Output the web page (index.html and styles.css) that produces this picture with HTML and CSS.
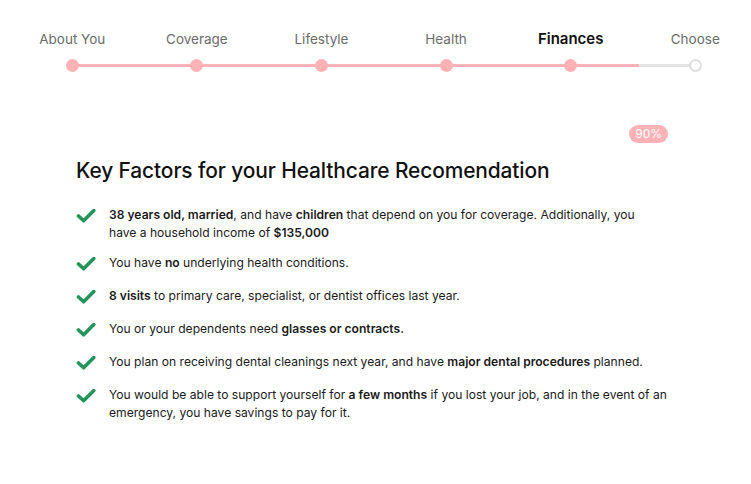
FILE: index.html
```html
<!DOCTYPE html>
<html lang="en">
<head>
<meta charset="utf-8">
<title>Key Factors</title>
<link rel="stylesheet" href="styles.css">
</head>
<body>
<div class="page">
  <nav class="stepper">
    <div class="labels">
      <span class="label">About You</span>
      <span class="label">Coverage</span>
      <span class="label">Lifestyle</span>
      <span class="label">Health</span>
      <span class="label current">Finances</span>
      <span class="label">Choose</span>
    </div>
    <div class="track">
      <div class="line"><div class="fill"></div></div>
      <span class="dot done"></span>
      <span class="dot done"></span>
      <span class="dot done"></span>
      <span class="dot done"></span>
      <span class="dot done"></span>
      <span class="dot todo"></span>
    </div>
  </nav>

  <div class="badge-row"><span class="badge">90%</span></div>

  <section class="factors">
    <h1 class="title">Key Factors for your Healthcare Recomendation</h1>
    <ul class="list">
      <li class="item">
        <svg class="check" viewBox="0 0 20 21" width="20" height="21"><path d="M2.5 10 L7.6 14.8 L17.8 4.6" fill="none" stroke="#24955a" stroke-width="3.6" stroke-linecap="round" stroke-linejoin="round"/></svg>
        <p class="text"><b>38 years old, married</b>, and have <b>children</b> that depend on you for coverage. Additionally, you<br>have a household income of <b>$135,000</b></p>
      </li>
      <li class="item">
        <svg class="check" viewBox="0 0 20 21" width="20" height="21"><path d="M2.5 10 L7.6 14.8 L17.8 4.6" fill="none" stroke="#24955a" stroke-width="3.6" stroke-linecap="round" stroke-linejoin="round"/></svg>
        <p class="text">You have <b>no</b> underlying health conditions.</p>
      </li>
      <li class="item">
        <svg class="check" viewBox="0 0 20 21" width="20" height="21"><path d="M2.5 10 L7.6 14.8 L17.8 4.6" fill="none" stroke="#24955a" stroke-width="3.6" stroke-linecap="round" stroke-linejoin="round"/></svg>
        <p class="text"><b>8 visits</b> to primary care, specialist, or dentist offices last year.</p>
      </li>
      <li class="item">
        <svg class="check" viewBox="0 0 20 21" width="20" height="21"><path d="M2.5 10 L7.6 14.8 L17.8 4.6" fill="none" stroke="#24955a" stroke-width="3.6" stroke-linecap="round" stroke-linejoin="round"/></svg>
        <p class="text">You or your dependents need <b>glasses or contracts.</b></p>
      </li>
      <li class="item">
        <svg class="check" viewBox="0 0 20 21" width="20" height="21"><path d="M2.5 10 L7.6 14.8 L17.8 4.6" fill="none" stroke="#24955a" stroke-width="3.6" stroke-linecap="round" stroke-linejoin="round"/></svg>
        <p class="text">You plan on receiving dental cleanings next year, and have <b>major dental procedures</b> planned.</p>
      </li>
      <li class="item">
        <svg class="check" viewBox="0 0 20 21" width="20" height="21"><path d="M2.5 10 L7.6 14.8 L17.8 4.6" fill="none" stroke="#24955a" stroke-width="3.6" stroke-linecap="round" stroke-linejoin="round"/></svg>
        <p class="text">You would be able to support yourself for <b>a few months</b> if you lost your job, and in the event of an emergency, you have savings to pay for it.</p>
      </li>
    </ul>
  </section>
</div>
</body>
</html>
```

FILE: styles.css
```css
html, body {
  margin: 0;
  padding: 0;
  background: #ffffff;
  overflow: hidden;
}

body {
  font-family: Inter, "Noto Sans", sans-serif;
  color: #111111;
}

.page {
  width: 751px;
  height: 484px;
}

.stepper {
  padding-top: 30px;
  padding-left: 10px;
}

.labels,
.track {
  display: grid;
  grid-template-columns: repeat(6, 124.6px);
}

.label {
  text-align: center;
  font-size: 13.5px;
  line-height: 18px;
  color: #6b6b6b;
  white-space: nowrap;
}

.label.current {
  color: #111111;
  font-weight: 600;
  font-size: 15px;
}

.track {
  position: relative;
  margin-top: 10px;
  height: 15px;
  align-items: center;
  justify-items: center;
}

.line {
  position: absolute;
  left: 62.3px;
  width: 623px;
  top: 6px;
  height: 3px;
  background: #e4e4e4;
}

.fill {
  width: 567px;
  height: 100%;
  background: #ffb2b6;
}

.dot {
  position: relative;
  width: 13px;
  height: 13px;
  border-radius: 50%;
  box-sizing: border-box;
}

.dot.done {
  background: #ffb2b6;
}

.dot.todo {
  background: #ffffff;
  border: 2px solid #dedede;
}

.badge-row {
  display: flex;
  justify-content: flex-end;
  padding-right: 83px;
  margin-top: 52px;
}

.badge {
  display: inline-block;
  background: #ffb2b6;
  color: #ffffff;
  font-size: 12px;
  line-height: 18px;
  padding: 0 6px;
  border-radius: 9px;
}

.factors {
  padding-left: 76px;
  padding-right: 76px;
}

.title {
  margin: 15px 0 22px;
  font-size: 20.9px;
  line-height: 26px;
  font-weight: 500;
  color: #111111;
  letter-spacing: -0.1px;
}

.list {
  list-style: none;
  margin: 0;
  padding: 0;
  display: flex;
  flex-direction: column;
  gap: 12px;
}

.item {
  display: flex;
  align-items: flex-start;
  gap: 13px;
}

.check {
  flex: none;
}

.text {
  margin: 0;
  font-size: 12.1px;
  line-height: 18px;
  color: #1a1a1a;
}

.text b {
  font-weight: 600;
}
```
